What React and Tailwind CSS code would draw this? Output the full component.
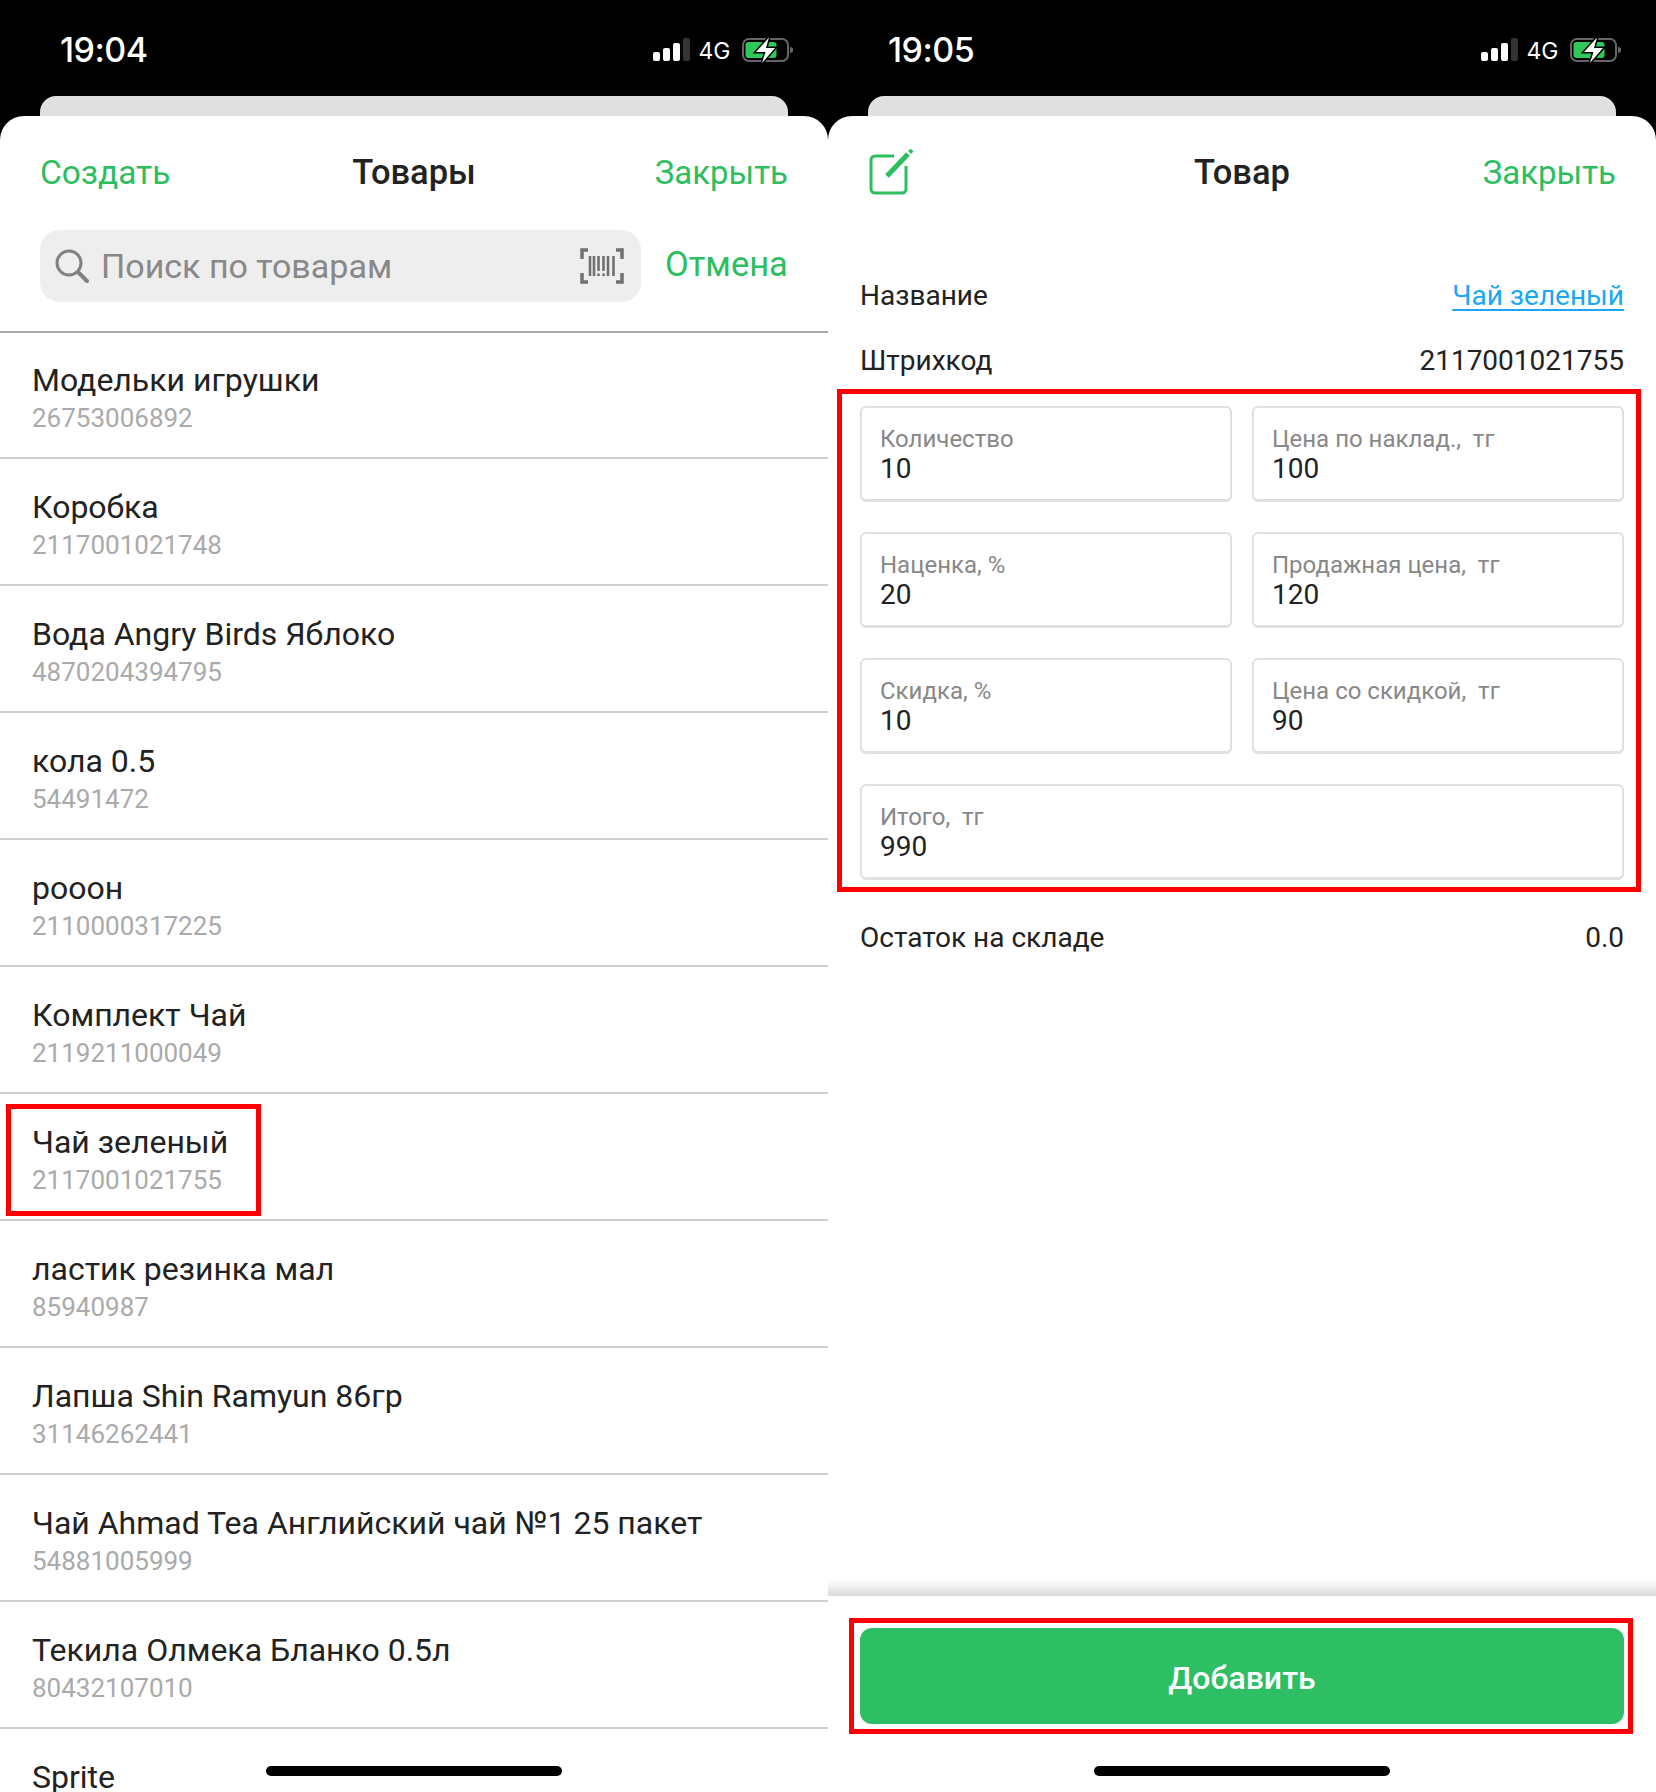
const items = [
  ["Модельки игрушки", "26753006892"],
  ["Коробка", "2117001021748"],
  ["Вода Angry Birds Яблоко", "4870204394795"],
  ["кола 0.5", "54491472"],
  ["рооон", "2110000317225"],
  ["Комплект Чай", "2119211000049"],
  ["Чай зеленый", "2117001021755", true],
  ["ластик резинка мал", "85940987"],
  ["Лапша Shin Ramyun 86гр", "31146262441"],
  ["Чай Ahmad Tea Английский чай №1 25 пакет", "54881005999"],
  ["Текила Олмека Бланко 0.5л", "80432107010"],
  ["Sprite", ""],
];

function StatusBar({ time }) {
  return (
    <div className="flex h-[96px] shrink-0 items-start justify-between pl-[60px] pr-[34px] pt-[30px] text-white">
      <span className="font-['Inter',sans-serif] text-[34px] leading-[40px] font-medium tracking-[-0.5px]">{time}</span>
      <svg width="142" height="27" viewBox="0 0 142 27" className="mt-[7px]" aria-hidden="true">
        <rect x="1" y="15" width="7" height="9" rx="2" fill="#fff" />
        <rect x="11" y="11" width="7" height="13" rx="2" fill="#fff" />
        <rect x="21" y="6" width="7" height="18" rx="2" fill="#fff" />
        <rect x="31" y="1" width="7" height="23" rx="2" fill="#333" />
        <text x="46.5" y="22" fontFamily="Inter, sans-serif" fontSize="23" fill="#fff">4G</text>
        <rect x="91" y="2" width="45" height="22" rx="6" fill="none" stroke="#666" strokeWidth="2" />
        <rect x="93.5" y="5" width="31" height="16" rx="3" fill="#30c85a" />
        <path d="M138 9.5 L141 11.5 V14.5 L138 16.5 Z" fill="#666" />
        <path d="M117 0.5 L104 15 H113.5 L110 26 L123 11 H114 Z" fill="#fff" stroke="#000" strokeWidth="3" paintOrder="stroke" />
      </svg>
    </div>
  );
}

function Sheet({ children }) {
  return (
    <>
      <div className="mx-10 h-5 shrink-0 rounded-t-[16px] bg-[#e0e0e0]" />
      <div className="flex min-h-0 flex-1 flex-col rounded-t-[24px] bg-white">{children}</div>
    </>
  );
}

function Header({ left, title }) {
  return (
    <div className="flex h-[112px] shrink-0 items-center justify-between px-10 text-[#2dbe60]">
      <div className="mt-[2px] w-[140px] text-[33.5px]">{left}</div>
      <span className="mt-[2px] text-[34.5px] font-medium text-[#222]">{title}</span>
      <div className="mt-[2px] w-[140px] text-right text-[33px]">Закрыть</div>
    </div>
  );
}

function Row({ name, code, marked }) {
  return (
    <div className="relative h-[127px] shrink-0 border-b-2 border-[#cfcfcf] px-8 pt-[29px]">
      <div className="text-[32px] leading-[39px] text-[#222]">{name}</div>
      <div className="text-[26px] leading-[36px] text-[#aaa]">{code}</div>
      {marked && <div className="absolute top-[10px] left-[6px] h-[112px] w-[255px] border-[5px] border-[#ff0000]" />}
    </div>
  );
}

function Field({ label, value, wide }) {
  return (
    <div className={`h-[96px] rounded-[6px] border-2 border-b-[3px] border-[#e0e0e0] bg-white px-[18px] pt-[16px] ${wide ? "col-span-2" : ""}`}>
      <div className="text-[24px] leading-[30px] whitespace-pre text-[#888]">{label}</div>
      <div className="text-[28px] leading-[30px] text-[#222]">{value}</div>
    </div>
  );
}

function InfoRow({ label, children }) {
  return (
    <div className="flex h-[58px] items-center justify-between pt-[2px] text-[28px] text-[#222]">
      <span>{label}</span>
      {children}
    </div>
  );
}

function HomeBar() {
  return <div className="absolute bottom-4 left-1/2 h-[10px] w-[296px] -translate-x-1/2 rounded-full bg-black" />;
}

function EditIcon() {
  return (
    <svg width="46" height="46" viewBox="0 0 46 46" fill="none" className="-mt-[2px]" aria-hidden="true">
      <path d="M26 7 H7 a4 4 0 0 0 -4 4 V40 a4 4 0 0 0 4 4 H34 a4 4 0 0 0 4 -4 V17" stroke="#2dbe60" strokeWidth="3" />
      <path d="M19 27 L40 5" stroke="#2dbe60" strokeWidth="5" />
      <path d="M41.5 3.5 L44 1" stroke="#2dbe60" strokeWidth="4" />
    </svg>
  );
}

function SearchIcon() {
  return (
    <svg width="34" height="34" viewBox="0 0 34 34" fill="none" stroke="#808080" strokeWidth="3" strokeLinecap="round" className="shrink-0" aria-hidden="true">
      <circle cx="14" cy="14" r="12" />
      <path d="M23 23 L32 32" strokeWidth="4" />
    </svg>
  );
}

function BarcodeIcon() {
  return (
    <svg width="44" height="36" viewBox="0 0 44 36" fill="none" stroke="#707070" className="shrink-0" aria-hidden="true">
      <path d="M8 2 H2 V11 M36 2 H42 V11 M8 34 H2 V25 M36 34 H42 V25" strokeWidth="3.5" />
      <path d="M10 8 V28 M14 8 V28 M18.5 8 V23 M23.5 8 V23 M28 8 V28 M33.5 8 V28" strokeWidth="2.6" />
      <path d="M18.5 25.5 V28 M23.5 25.5 V28" strokeWidth="2.6" />
    </svg>
  );
}

export default function App() {
  return (
    <div className="grid h-[1792px] w-[1656px] grid-cols-2 overflow-hidden bg-black font-['Roboto',sans-serif]">
      <div className="relative flex h-[1792px] min-w-0 flex-col overflow-hidden">
        <StatusBar time="19:04" />
        <Sheet>
          <Header left="Создать" title="Товары" />
          <div className="flex h-[105px] shrink-0 items-start gap-[24px] border-b-2 border-[#aaa] pr-10 pl-10 pt-[2px]">
            <div className="flex h-[72px] w-[601px] shrink-0 items-center rounded-[20px] bg-[#eeeeee] pr-[17px] pl-[15px]">
              <SearchIcon />
              <span className="mt-[1px] ml-[12px] flex-1 text-[34px] text-[#888]">Поиск по товарам</span>
              <BarcodeIcon />
            </div>
            <span className="mt-[1px] text-[34.5px] leading-[66px] text-[#2dbe60]">Отмена</span>
          </div>
          <div className="-mt-[1px] flex min-h-0 flex-1 flex-col overflow-hidden">
            {items.map((it) => (
              <Row key={it[0]} name={it[0]} code={it[1]} marked={it[2]} />
            ))}
          </div>
        </Sheet>
        <HomeBar />
      </div>

      <div className="relative flex h-[1792px] min-w-0 flex-col overflow-hidden">
        <StatusBar time="19:05" />
        <Sheet>
          <Header left={<EditIcon />} title="Товар" />
          <div className="flex min-h-0 flex-1 flex-col pt-[38px]">
            <div className="flex flex-col gap-[7px] px-8">
              <InfoRow label="Название">
                <span className="text-[#1aa7f5] underline decoration-2 underline-offset-4">Чай зеленый</span>
              </InfoRow>
              <InfoRow label="Штрихкод">
                <span>2117001021755</span>
              </InfoRow>
            </div>
            <div className="mr-[15px] ml-[9px] grid grid-cols-2 gap-x-[20px] gap-y-[30px] border-[5px] border-[#ff0000] pt-[12px] pr-[12px] pb-[7px] pl-[18px]">
              <Field label="Количество" value="10" />
              <Field label="Цена по наклад.,  тг" value="100" />
              <Field label="Наценка, %" value="20" />
              <Field label="Продажная цена,  тг" value="120" />
              <Field label="Скидка, %" value="10" />
              <Field label="Цена со скидкой,  тг" value="90" />
              <Field label="Итого,  тг" value="990" wide />
            </div>
            <div className="mt-[16px] px-8">
              <InfoRow label="Остаток на складе">
                <span>0.0</span>
              </InfoRow>
            </div>
            <div className="mt-auto h-4 bg-gradient-to-b from-transparent to-black/15" />
          </div>
          <div className="h-[196px] shrink-0 pt-[22px] pr-[23px] pl-[21px]">
            <div className="border-[5px] border-[#ff0000] pt-[5px] pr-[4px] pb-[5px] pl-[6px]">
              <div className="flex h-[96px] items-center justify-center rounded-[12px] bg-[#2ebf64] pt-[3px] text-[32px] font-medium text-white">
                Добавить
              </div>
            </div>
          </div>
        </Sheet>
        <HomeBar />
      </div>
    </div>
  );
}
